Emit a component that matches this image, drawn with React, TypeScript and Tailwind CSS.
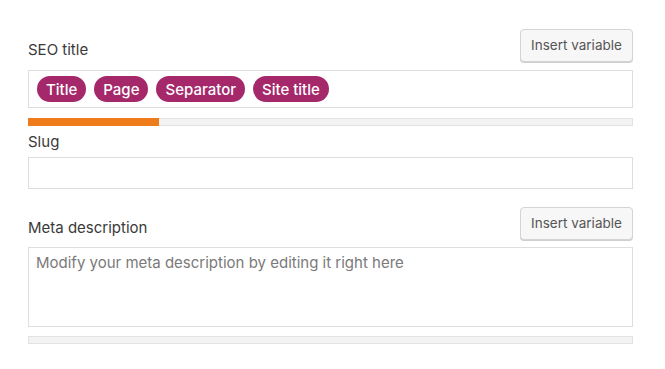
import React from "react";

const Pill = ({ children }: { children: React.ReactNode }) => (
  <span className="inline-flex h-[26px] items-center rounded-full bg-[#a4286a] px-[9px] text-[15px] font-medium leading-none text-white">
    {children}
  </span>
);

const InsertButton = () => (
  <button className="flex h-[33px] w-[113px] items-center justify-center rounded-[4px] border border-[#d4d4d4] bg-[#f7f7f7] text-[13.5px] text-[#555] shadow-[0_1px_0_#cfcfcf]">
    Insert variable
  </button>
);

export default function App() {
  return (
    <div
      className="h-[369px] w-[665px] bg-white pl-[28px] pr-[32px] pt-[29px]"
      style={{ fontFamily: "Inter, 'Noto Sans', sans-serif" }}
    >
      <div className="flex items-end justify-between">
        <label className="mb-[2px] text-[15px] leading-[20px] text-[#3a3a3a]">SEO title</label>
        <InsertButton />
      </div>
      <div className="mt-[8px] flex h-[38px] items-center gap-[8px] border border-[#dedede] bg-white px-[8px]">
        <Pill>Title</Pill>
        <Pill>Page</Pill>
        <Pill>Separator</Pill>
        <Pill>Site title</Pill>
      </div>
      <div className="mt-[10px] h-[8px] border border-[#e2e2e2] bg-[#f3f3f3]">
        <div className="-mt-px -ml-px h-[8px] w-[131px] bg-[#ee7c1b]" />
      </div>

      <label className="mt-[6px] block text-[15px] leading-[20px] text-[#3a3a3a]">Slug</label>
      <div className="mt-[5px] h-[32px] border border-[#dedede] bg-white" />

      <div className="mt-[18px] flex items-end justify-between">
        <label className="mb-[2px] text-[15px] leading-[20px] text-[#3a3a3a]">Meta description</label>
        <InsertButton />
      </div>
      <div className="mt-[7px] h-[80px] border border-[#dedede] bg-white px-[7px] pt-[5px] text-[15px] leading-[20px] text-[#7a7a7a]">
        Modify your meta description by editing it right here
      </div>
      <div className="mt-[9px] h-[8px] border border-[#e2e2e2] bg-[#f3f3f3]" />
    </div>
  );
}
